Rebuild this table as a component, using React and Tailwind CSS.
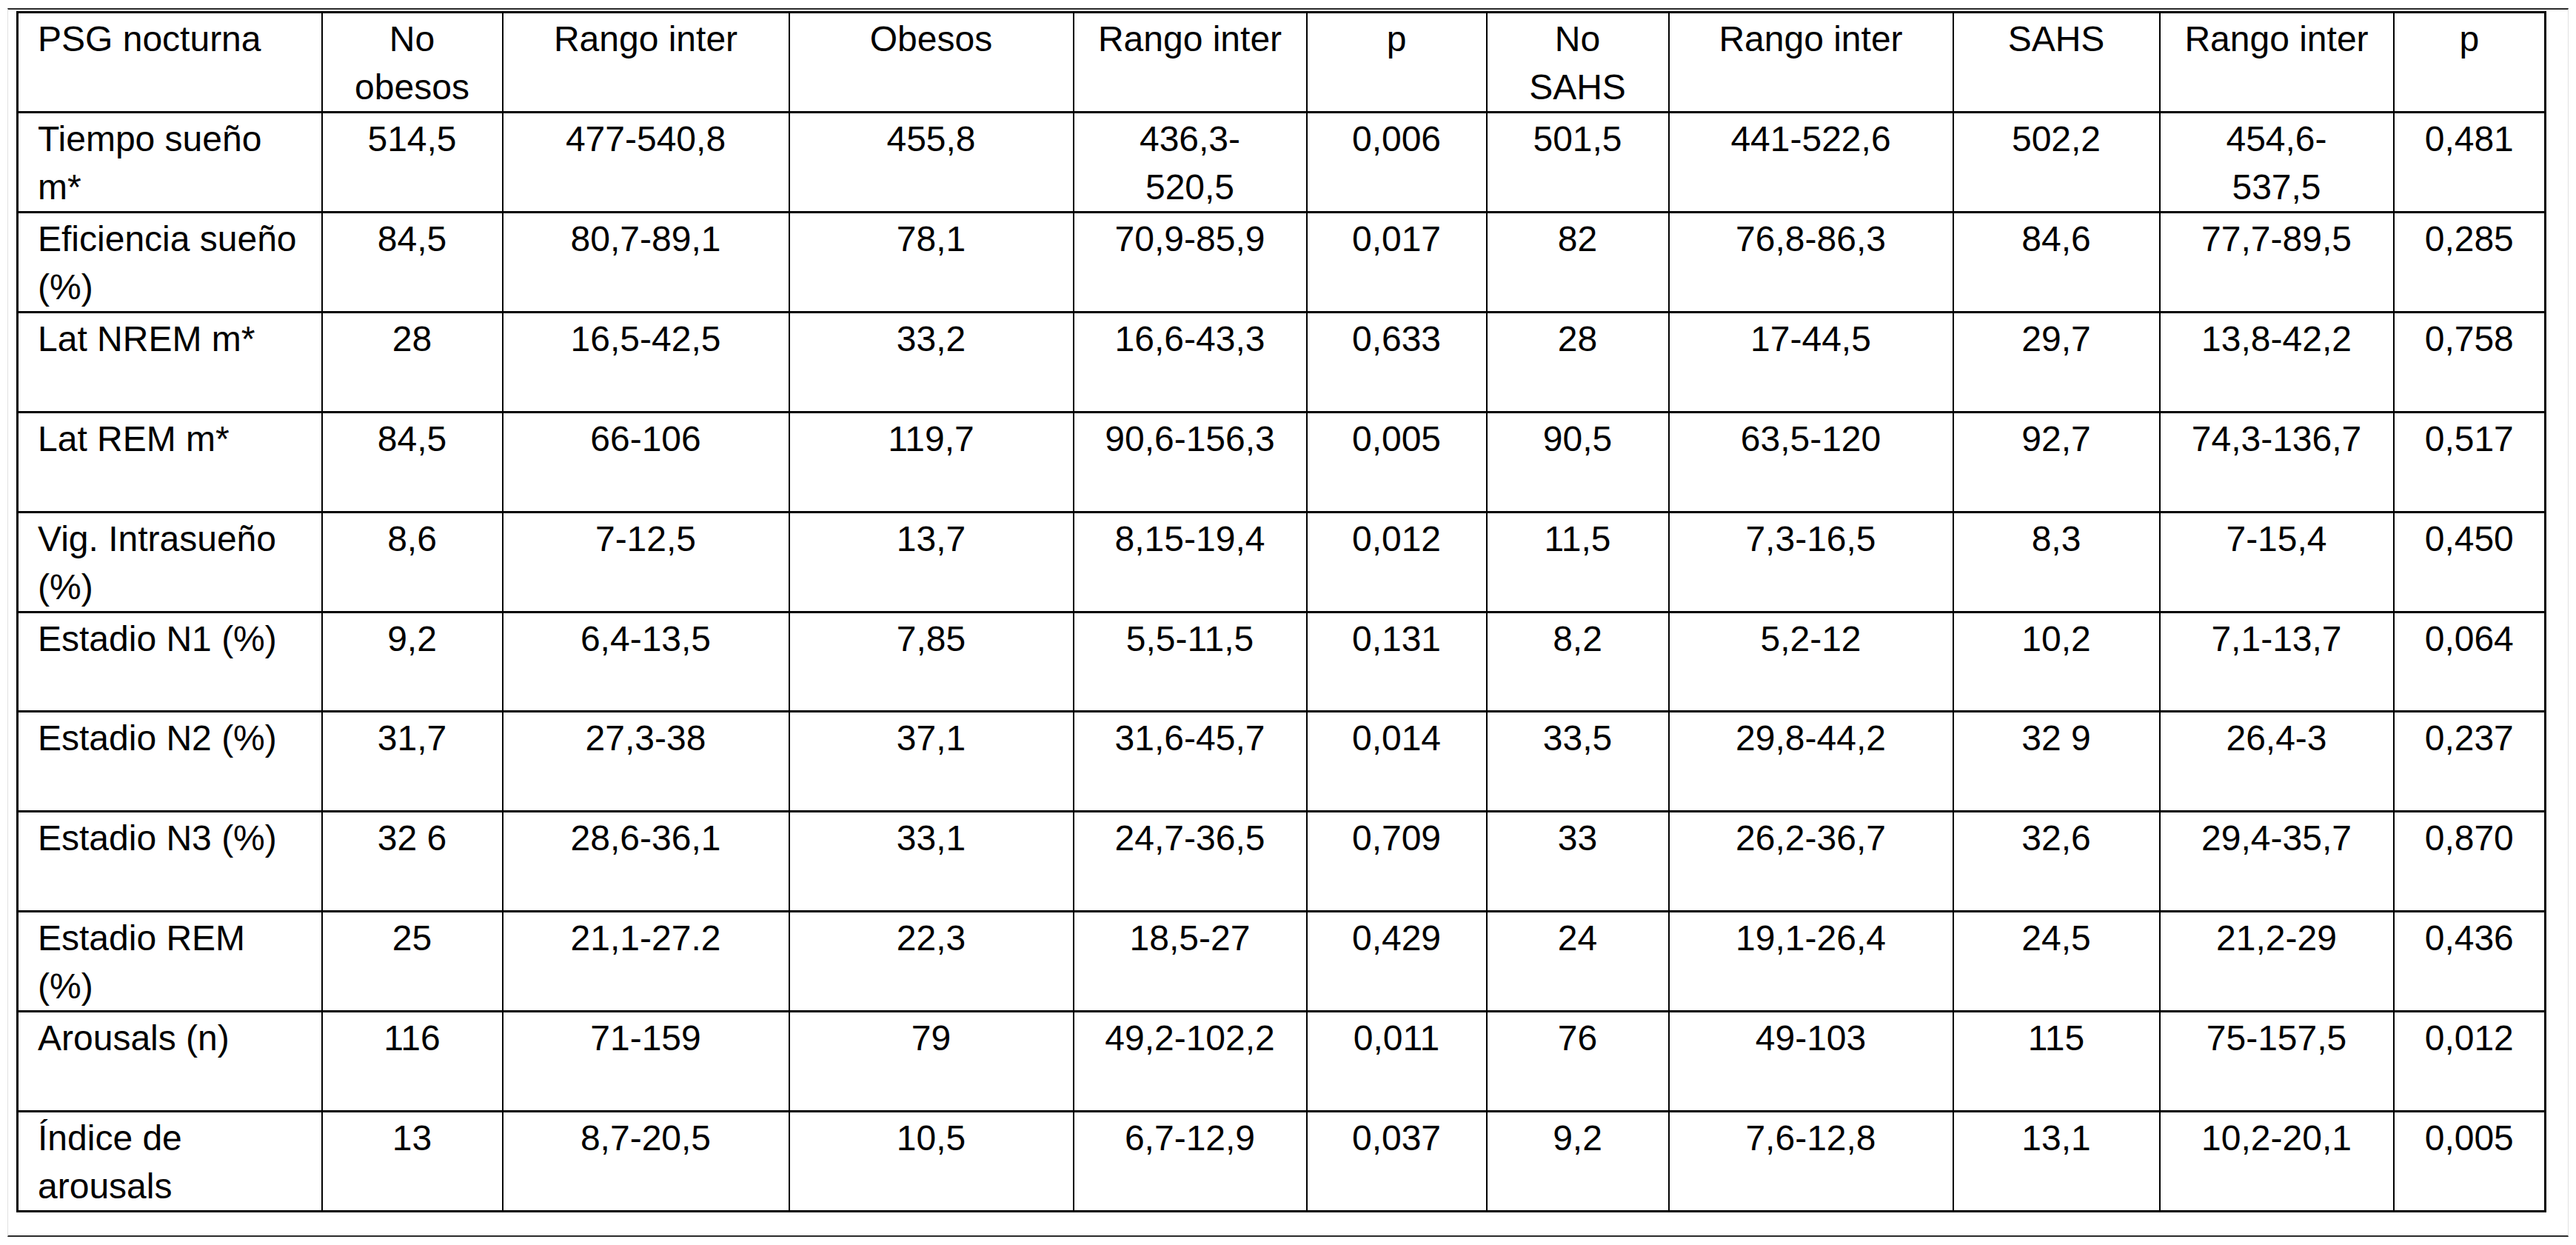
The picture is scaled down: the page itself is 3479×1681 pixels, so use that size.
import React from 'react';

const colWidths = ['w-[411px]', 'w-[244px]', 'w-[387px]', 'w-[384px]', 'w-[315px]', 'w-[243px]', 'w-[246px]', 'w-[384px]', 'w-[279px]', 'w-[316px]', 'w-[205px]'];

const header = ['PSG nocturna', 'No\nobesos', 'Rango inter', 'Obesos', 'Rango inter', 'p', 'No\nSAHS', 'Rango inter', 'SAHS', 'Rango inter', 'p'];

const rows = [
  ['Tiempo sueño\nm*', '514,5', '477-540,8', '455,8', '436,3-\n520,5', '0,006', '501,5', '441-522,6', '502,2', '454,6-\n537,5', '0,481'],
  ['Eficiencia sueño\n(%)', '84,5', '80,7-89,1', '78,1', '70,9-85,9', '0,017', '82', '76,8-86,3', '84,6', '77,7-89,5', '0,285'],
  ['Lat NREM m*', '28', '16,5-42,5', '33,2', '16,6-43,3', '0,633', '28', '17-44,5', '29,7', '13,8-42,2', '0,758'],
  ['Lat REM m*', '84,5', '66-106', '119,7', '90,6-156,3', '0,005', '90,5', '63,5-120', '92,7', '74,3-136,7', '0,517'],
  ['Vig. Intrasueño\n(%)', '8,6', '7-12,5', '13,7', '8,15-19,4', '0,012', '11,5', '7,3-16,5', '8,3', '7-15,4', '0,450'],
  ['Estadio N1 (%)', '9,2', '6,4-13,5', '7,85', '5,5-11,5', '0,131', '8,2', '5,2-12', '10,2', '7,1-13,7', '0,064'],
  ['Estadio N2 (%)', '31,7', '27,3-38', '37,1', '31,6-45,7', '0,014', '33,5', '29,8-44,2', '32 9', '26,4-3', '0,237'],
  ['Estadio N3 (%)', '32 6', '28,6-36,1', '33,1', '24,7-36,5', '0,709', '33', '26,2-36,7', '32,6', '29,4-35,7', '0,870'],
  ['Estadio REM\n(%)', '25', '21,1-27.2', '22,3', '18,5-27', '0,429', '24', '19,1-26,4', '24,5', '21,2-29', '0,436'],
  ['Arousals (n)', '116', '71-159', '79', '49,2-102,2', '0,011', '76', '49-103', '115', '75-157,5', '0,012'],
  ['Índice de\narousals', '13', '8,7-20,5', '10,5', '6,7-12,9', '0,037', '9,2', '7,6-12,8', '13,1', '10,2-20,1', '0,005'],
];

function Cell({ text, first }) {
  const lines = text.split('\n');
  return (
    <td
      className={`align-top border-x-2 border-y-[3px] border-black pt-[2px] leading-[65px] whitespace-nowrap ${
        first ? 'text-left pl-[26px]' : 'text-center px-1'
      }`}
    >
      {lines.map((l, i) => (
        <React.Fragment key={i}>
          {i > 0 && <br />}
          {l}
        </React.Fragment>
      ))}
    </td>
  );
}

export default function App() {
  return (
    <div className="w-[3479px] h-[1681px] bg-white overflow-hidden pt-[11px] pl-[10px]">
      {/* marco de la página */}
      <div className="w-[3459px] h-[1659px] border-t-2 border-b-2 border-t-[#2a2a2a] border-b-[#2a2a2a] border-l border-r border-l-[#e2e2e2] border-r-[#e2e2e2] pl-[11px] pt-[2px]">
        <table
          className="table-fixed border-collapse border-[3px] border-black w-[3414px] text-black text-[48px]"
          style={{ fontFamily: '"Liberation Sans", Arial, sans-serif' }}
        >
          <colgroup>
            {colWidths.map((w, i) => (
              <col key={i} className={w} />
            ))}
          </colgroup>
          <tbody>
            <tr className="h-[134.8px]">
              {header.map((h, i) => (
                <Cell key={i} text={h} first={i === 0} />
              ))}
            </tr>
            {rows.map((r, ri) => (
              <tr key={ri} className="h-[134.8px]">
                {r.map((c, ci) => (
                  <Cell key={ci} text={c} first={ci === 0} />
                ))}
              </tr>
            ))}
          </tbody>
        </table>
      </div>
    </div>
  );
}
